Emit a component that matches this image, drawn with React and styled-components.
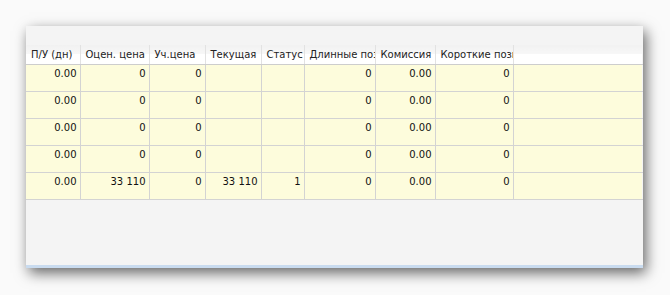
import styled, { createGlobalStyle } from "styled-components";

const Global = createGlobalStyle`
  body {
    margin: 0;
    background: #fafafa;
    font-family: "DejaVu Sans", Verdana, sans-serif;
  }
`;

const Page = styled.div`
  padding: 26px 0 0 26px;
  height: 295px;
  box-sizing: border-box;
`;

const Panel = styled.div`
  width: 617px;
  height: 242px;
  background: #f4f4f4;
  box-shadow: 3px 5px 13px rgba(0, 0, 0, 0.6);
  border-bottom: 3px solid #c9dbef;
  box-sizing: border-box;
  display: flex;
  flex-direction: column;
`;

const TopBar = styled.div`
  height: 19px;
  flex: none;
`;

const Grid = styled.table`
  border-collapse: collapse;
  table-layout: fixed;
  width: 100%;
  font-size: 10px;
  color: #111;
`;

const Head = styled.th`
  height: 19px;
  padding: 0 5px;
  font-weight: normal;
  text-align: left;
  white-space: nowrap;
  overflow: hidden;
  text-overflow: clip;
  color: #222;
  background: linear-gradient(#f1f1f1, #f7f7f7 45%, #ffffff 50%, #ffffff);
  border-right: 1px solid ${(p) => (p.$last ? "transparent" : "#e2e2e2")};
  border-bottom: 1px solid #cdcdcd;
  box-sizing: border-box;
`;

const Cell = styled.td`
  height: 27px;
  padding: 3px 3px 0 3px;
  vertical-align: top;
  text-align: right;
  white-space: nowrap;
  overflow: hidden;
  background: #fdfcdc;
  border-right: 1px solid ${(p) => (p.$last ? "transparent" : "#d3d3d3")};
  border-bottom: 1px solid #d3d3d3;
  box-sizing: border-box;
`;

const columns = [
  { title: "П/У (дн)", width: 54 },
  { title: "Оцен. цена", width: 69 },
  { title: "Уч.цена", width: 56 },
  { title: "Текущая", width: 56 },
  { title: "Статус", width: 43 },
  { title: "Длинные позиции", width: 71 },
  { title: "Комиссия", width: 60 },
  { title: "Короткие позиции", width: 78 },
];

const rows = [
  ["0.00", "0", "0", "", "", "0", "0.00", "0"],
  ["0.00", "0", "0", "", "", "0", "0.00", "0"],
  ["0.00", "0", "0", "", "", "0", "0.00", "0"],
  ["0.00", "0", "0", "", "", "0", "0.00", "0"],
  ["0.00", "33 110", "0", "33 110", "1", "0", "0.00", "0"],
];

export default function App() {
  return (
    <>
      <Global />
      <Page>
        <Panel>
          <TopBar />
          <Grid>
            <colgroup>
              {columns.map((c) => (
                <col key={c.title} style={{ width: c.width }} />
              ))}
              <col />
            </colgroup>
            <thead>
              <tr>
                {columns.map((c) => (
                  <Head key={c.title}>{c.title}</Head>
                ))}
                <Head $last />
              </tr>
            </thead>
            <tbody>
              {rows.map((r, i) => (
                <tr key={i}>
                  {r.map((v, j) => (
                    <Cell key={j}>{v}</Cell>
                  ))}
                  <Cell $last />
                </tr>
              ))}
            </tbody>
          </Grid>
        </Panel>
      </Page>
    </>
  );
}
